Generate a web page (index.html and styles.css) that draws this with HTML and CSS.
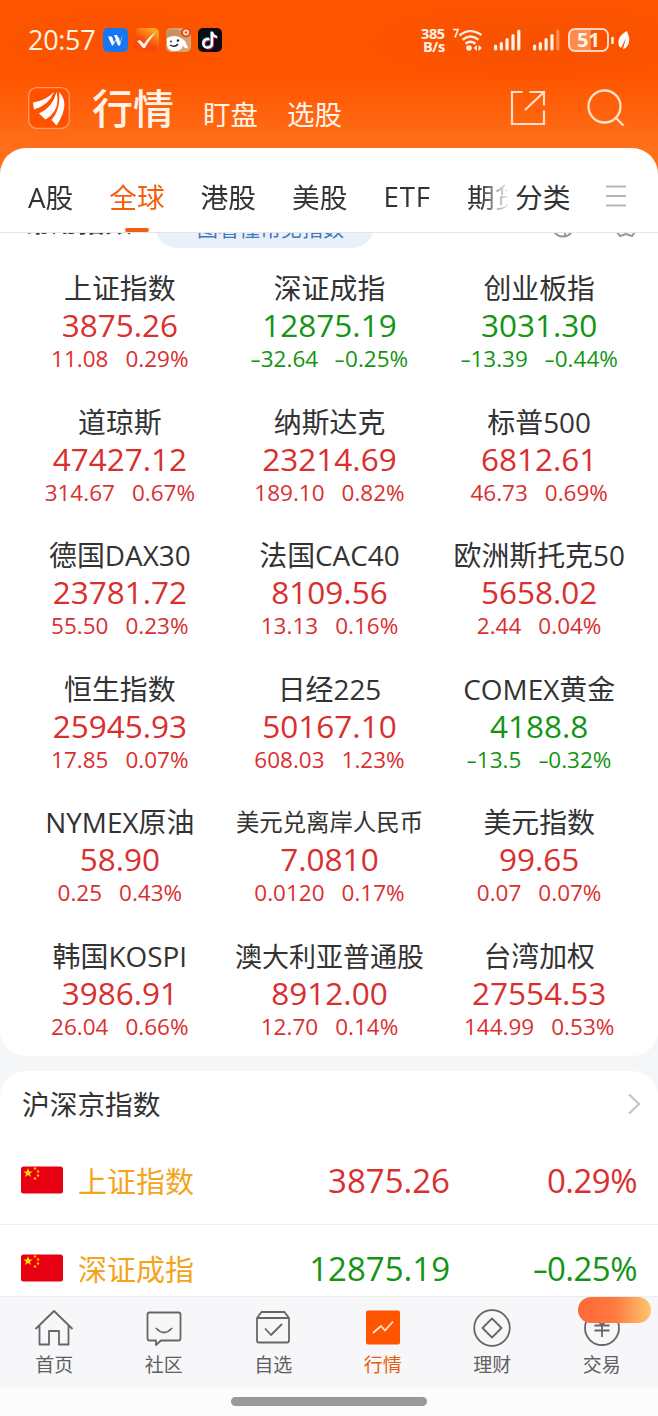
FILE: index.html
```html
<!DOCTYPE html>
<html lang="zh-CN">
<head>
    <meta charset="UTF-8">
    <meta name="viewport" content="width=device-width, initial-scale=1.0">
    <title>行情</title>
    <link rel="stylesheet" href="styles.css">
</head>
<body>
    <div class="top">
        <div class="status-bar">
            <span class="time">20:57</span>
            <div class="app-icons">
                <svg width="25" height="24" viewBox="0 0 25 24"><rect width="25" height="24" rx="5" fill="#1677f0"/><path d="M5 8.500h4l2 6 3-5h2l1 5 3-9-3 12h-2l-2-5-3 5H9zM11 7h3l1 2-2 3z" fill="#fff"/></svg>
                <svg width="24" height="24" viewBox="0 0 24 24"><defs><linearGradient id="ck" x1="0" y1="1" x2=".6" y2="0"><stop offset=".5" stop-color="#f94a0c"/><stop offset="1" stop-color="#ffa51c"/></linearGradient></defs><rect width="24" height="24" rx="5" fill="url(#ck)"/><path d="M2 13l3-1 4 4C12 11 16 7 21 4 17 9 13 14 10 20H8z" fill="#fff2e8"/></svg>
                <svg width="25" height="24" viewBox="0 0 25 24"><rect width="25" height="24" rx="5" fill="#d8a374"/><path d="M1 10Q9 6 15 10l4 3 3 7Q18 21 17 17q-1 6-8 6-7 0-8-6z" fill="#fff"/><path d="M0 10Q8 5 17 10L16 3 5 1 0 4z" fill="#c99160"/><circle cx="20" cy="4.500" r="5" fill="#e3491f"/><circle cx="20" cy="4.500" r="3" fill="#ffe1bd"/><circle cx="20" cy="4.500" r="1.200" fill="#e3491f"/><path d="M4 17q5 3 8-1" fill="none" stroke="#222" stroke-width="1.400"/><circle cx="5" cy="13.500" r=".9" fill="#222"/><circle cx="12" cy="12.500" r="1.200" fill="#222"/></svg>
                <svg width="24" height="24" viewBox="0 0 24 24"><rect width="24" height="24" rx="5" fill="#0d0c14"/><g fill="none" stroke-width="2.200"><path d="M11.500 11q-6 0-6 4.500t4.500 4 4-4.500V4q1 4.500 5 5" stroke="#25f4ee" transform="translate(-.6 -.6)"/><path d="M11.500 11q-6 0-6 4.500t4.500 4 4-4.500V4q1 4.500 5 5" stroke="#fe2c55" transform="translate(.8 .8)"/><path d="M11.500 11q-6 0-6 4.500t4.500 4 4-4.500V4q1 4.500 5 5" stroke="#fff"/></g></svg>
            </div>
            <div class="speed"><span>385</span><span>B/s</span></div>
            <svg class="wifi" width="30" height="24" viewBox="0 0 30 24"><path d="M0 1.500h5L2 9.500" fill="none" stroke="#ffefe0" stroke-width="1.700"/><g fill="none" stroke="#ffefe0" stroke-width="2.400"><path d="M6.500 7.500q10-8.500 22-.5"/><path d="M9.500 11.700q8-6.500 16 0"/><path d="M12.500 15.700q5-4 10 0"/></g><circle cx="16" cy="20" r="2.800" fill="#ffefe0"/><path d="M24 17v6l-3.500-3zM25.500 17v6l3.500-3z" fill="#ffefe0"/></svg>
            <svg class="signal" width="27" height="22" viewBox="0 0 27 22"><path d="M1.600 17v3M7.300 14.500V20M13.100 10.500V20M19 6.500V20M24.800 2V20" stroke="#fff2e6" stroke-width="3.200" stroke-linecap="round"/></svg>
            <svg class="signal" width="27" height="22" viewBox="0 0 27 22"><path d="M1.600 17v3M7.300 14.500V20M13.100 10.500V20M19 6.500V20" stroke="#fff2e6" stroke-width="3.200" stroke-linecap="round"/><path d="M24.800 2V20" stroke="#ff8a50" stroke-width="3.200" stroke-linecap="round"/></svg>
            <div class="battery">51</div>
            <svg class="leaf" width="20" height="19" viewBox="0 0 20 19"><path d="M2.500 6v7" stroke="#ffefe0" stroke-width="2.500"/><path d="M17 0C11 3 7 8 9 15l2 2 5-10-3 11C18 17 20 11 19 6z" fill="#fff"/></svg>
        </div>
        <div class="header">
            <svg class="logo" width="42" height="42" viewBox="0 0 42 42"><rect x=".7" y=".7" width="40.600" height="40.600" rx="8" fill="#ff5100" stroke="#ff9b68" stroke-width="1.300"/><path d="M5 15.500Q17 14 26 5 21 18 6 22.500zM11 26.500Q25 20 28.500 5 33 23 17.500 32.500zM23.500 33Q33 22 31 5 43 17 28.500 38.500z" fill="#fff"/></svg>
            <span class="title">行情</span>
            <span class="link">盯盘</span>
            <span class="link">选股</span>
            <svg class="share" width="36" height="36" viewBox="0 0 36 36" fill="none" stroke="#ffe0c8" stroke-width="2.200"><path d="M12.500 2H2v32h32V20.500M19.500 2H34v13.500M34 2L15 20"/></svg>
            <svg width="38" height="38" viewBox="0 0 38 38" fill="none" stroke="#ffe0c8" stroke-width="2.300"><circle cx="17.500" cy="17.500" r="16"/><path d="M28.500 28.500l8 8"/></svg>
        </div>
    </div>

    <div class="card indices">
        <div class="tabs">
            <div class="tab-scroll">
                <span>A股</span>
                <span class="active">全球</span>
                <span>港股</span>
                <span>美股</span>
                <span class="etf">ETF</span>
                <span>期货</span>
            </div>
            <span class="sort">分类</span>
            <svg width="22" height="22" viewBox="0 0 22 22"><path d="M1 1.500h20M1 11h20M1 20.500h20" stroke="#b5b5b5" stroke-width="2.200"/></svg>
        </div>
        <!-- row scrolled half under the tabs -->
        <div class="scrolled">
            <span class="common">常用指数</span>
            <span class="guide">一图看懂常见指数</span>
            <svg class="half-icons" width="86" height="24" viewBox="0 0 86 24" fill="none" stroke="#999" stroke-width="2"><circle cx="12" cy="12" r="10.500"/><path d="M14 8v14M66 18l3 4 6-2 6 2 3-4"/></svg>
        </div>
        <div class="grid">
            <div class="cell up"><span class="name">上证指数</span><span class="price">3875.26</span><span class="change"><i>11.08</i><i>0.29%</i></span></div>
            <div class="cell down"><span class="name">深证成指</span><span class="price">12875.19</span><span class="change"><i><b>-</b>32.64</i><i><b>-</b>0.25%</i></span></div>
            <div class="cell down"><span class="name">创业板指</span><span class="price">3031.30</span><span class="change"><i><b>-</b>13.39</i><i><b>-</b>0.44%</i></span></div>
            <div class="cell up"><span class="name">道琼斯</span><span class="price">47427.12</span><span class="change"><i>314.67</i><i>0.67%</i></span></div>
            <div class="cell up"><span class="name">纳斯达克</span><span class="price">23214.69</span><span class="change"><i>189.10</i><i>0.82%</i></span></div>
            <div class="cell up"><span class="name">标普500</span><span class="price">6812.61</span><span class="change"><i>46.73</i><i>0.69%</i></span></div>
            <div class="cell up"><span class="name">德国DAX30</span><span class="price">23781.72</span><span class="change"><i>55.50</i><i>0.23%</i></span></div>
            <div class="cell up"><span class="name">法国CAC40</span><span class="price">8109.56</span><span class="change"><i>13.13</i><i>0.16%</i></span></div>
            <div class="cell up"><span class="name">欧洲斯托克50</span><span class="price">5658.02</span><span class="change"><i>2.44</i><i>0.04%</i></span></div>
            <div class="cell up"><span class="name">恒生指数</span><span class="price">25945.93</span><span class="change"><i>17.85</i><i>0.07%</i></span></div>
            <div class="cell up"><span class="name">日经225</span><span class="price">50167.10</span><span class="change"><i>608.03</i><i>1.23%</i></span></div>
            <div class="cell down"><span class="name">COMEX黄金</span><span class="price">4188.8</span><span class="change"><i><b>-</b>13.5</i><i><b>-</b>0.32%</i></span></div>
            <div class="cell up"><span class="name">NYMEX原油</span><span class="price">58.90</span><span class="change"><i>0.25</i><i>0.43%</i></span></div>
            <div class="cell up"><span class="name small">美元兑离岸人民币</span><span class="price">7.0810</span><span class="change"><i>0.0120</i><i>0.17%</i></span></div>
            <div class="cell up"><span class="name">美元指数</span><span class="price">99.65</span><span class="change"><i>0.07</i><i>0.07%</i></span></div>
            <div class="cell up"><span class="name">韩国KOSPI</span><span class="price">3986.91</span><span class="change"><i>26.04</i><i>0.66%</i></span></div>
            <div class="cell up"><span class="name long">澳大利亚普通股</span><span class="price">8912.00</span><span class="change"><i>12.70</i><i>0.14%</i></span></div>
            <div class="cell up"><span class="name">台湾加权</span><span class="price">27554.53</span><span class="change"><i>144.99</i><i>0.53%</i></span></div>
        </div>
    </div>

    <div class="card china">
        <div class="section-title">
            <span>沪深京指数</span>
            <svg width="14" height="22" viewBox="0 0 14 22"><path d="M2 1.500l10 9.500-10 9.500" fill="none" stroke="#c4c4c4" stroke-width="2.200"/></svg>
        </div>
        <div class="row up">
            <svg class="flag" width="42" height="28" viewBox="0 0 42 28"><rect y=".5" width="42" height="27" rx="2.500" fill="#e60012"/><path id="star" d="M7 2l1.200 3.400h3.600L8.900 7.500l1.100 3.500L7 8.900 4 11l1.100-3.500-2.900-2.100h3.600z" fill="#ffde00"/><g fill="#ffb400"><circle cx="14" cy="2.500" r="1.300"/><circle cx="17" cy="5.500" r="1.300"/><circle cx="17" cy="9.500" r="1.300"/><circle cx="14" cy="12.500" r="1.300"/></g></svg>
            <span class="row-name">上证指数</span>
            <span class="row-price">3875.26</span>
            <span class="row-pct">0.29%</span>
        </div>
        <div class="row down">
            <svg class="flag" width="42" height="28" viewBox="0 0 42 28"><rect y=".5" width="42" height="27" rx="2.500" fill="#e60012"/><use href="#star"/><g fill="#ffb400"><circle cx="14" cy="2.500" r="1.300"/><circle cx="17" cy="5.500" r="1.300"/><circle cx="17" cy="9.500" r="1.300"/><circle cx="14" cy="12.500" r="1.300"/></g></svg>
            <span class="row-name">深证成指</span>
            <span class="row-price">12875.19</span>
            <span class="row-pct"><b>-</b>0.25%</span>
        </div>
    </div>

    <div class="nav">
        <div class="nav-item">
            <svg width="40" height="40" viewBox="0 0 40 40"><path d="M1.500 21L20 3l18.500 18M5.500 18v18.500H15V23h10v13.500h9.500V18"/></svg>
            <span>首页</span>
        </div>
        <div class="nav-item">
            <svg width="40" height="40" viewBox="0 0 40 40"><path d="M5.500 4.500h29q2 0 2 2v24q0 2-2 2H17L12 37v-4.500H5.500q-2 0-2-2v-24q0-2 2-2zM12 20q8 9 16 0"/></svg>
            <span>社区</span>
        </div>
        <div class="nav-item">
            <svg width="40" height="40" viewBox="0 0 40 40"><path d="M4 10h32v22.500q0 2-2 2H6q-2 0-2-2zL8.500 4h23L36 10M12 20.500l6 6.500 11-11"/></svg>
            <span>自选</span>
        </div>
        <div class="nav-item current">
            <svg width="40" height="40" viewBox="0 0 40 40"><rect x="3" y="2.500" width="34" height="34" rx="2" fill="#ff5500" stroke="none"/><path d="M10 25l8-7 4 4.500 8-9" stroke="#ffe6d5"/></svg>
            <span>行情</span>
        </div>
        <div class="nav-item">
            <svg width="40" height="40" viewBox="0 0 40 40"><circle cx="20" cy="20" r="17.800"/><path d="M20 10.500l9.500 9.500-9.500 9.500-9.500-9.500z"/></svg>
            <span>理财</span>
        </div>
        <div class="nav-item">
            <svg width="40" height="40" viewBox="0 0 40 40"><circle cx="20" cy="20" r="17"/><path d="M14 11l6 6 6-6M12.500 17.500h15M12.500 22.500h15M20 17v12"/></svg>
            <span>交易</span>
            <div class="badge"></div>
        </div>
    </div>
    <div class="home-bar"><div class="handle"></div></div>
</body>
</html>
```
FILE: styles.css
```css
* {
    box-sizing: border-box;
}
body {
    margin: 0;
    height: 1416px;
    overflow: hidden;
    display: flex;
    flex-direction: column;
    background: #f5f6f8;
    color: #333;
    font-family: "Open Sans", "Noto Sans CJK SC", sans-serif;
}
svg {
    display: block;
    flex: none;
}
span {
    white-space: nowrap;
}
.top {
    flex: none;
    height: 180px;
    background: linear-gradient(#ff5500 0, #ff5500 76px, #ff6f1a 148px);
    color: #fff4e8;
}
.status-bar {
    height: 80px;
    display: flex;
    align-items: center;
    padding-left: 28px;
    background: radial-gradient(ellipse 190px 45px at 530px 42px, #f65000, transparent), radial-gradient(ellipse 150px 45px at 120px 42px, #fa5200, transparent);
}
.time {
    width: 75px;
    padding-bottom: 2px;
    font-size: 27px;
    font-weight: 500;
    letter-spacing: -0.3px;
}
.app-icons {
    display: flex;
    gap: 7px;
    width: 318px;
}
.speed {
    display: flex;
    flex-direction: column;
    width: 32px;
    font-size: 14.500px;
    font-weight: 700;
    line-height: 13px;
    letter-spacing: -0.4px;
}
.speed span:last-child {
    padding-left: 2px;
}
.wifi {
    margin-right: 11px;
}
.signal {
    margin-right: 12px;
}
.battery {
    width: 41px;
    height: 24px;
    margin: 0 1px 0 -4px;
    border: 2px solid #ffd9bd;
    border-radius: 7px;
    background: linear-gradient(90deg, #ff8a50 58%, transparent 58%);
    font-size: 20px;
    font-weight: 700;
    line-height: 19px;
    text-align: center;
}
.header {
    height: 68px;
    display: flex;
    align-items: center;
    padding: 0 33px 12px 28px;
}
.title {
    margin-left: 22px;
    font-size: 41px;
    font-weight: 500;
    line-height: 50px;
}
.link {
    margin: 13px 0 0 29px;
    font-size: 27.500px;
    line-height: 32px;
}
.share {
    margin: 0 41px 0 auto;
}
.card {
    flex: none;
    background: #fff;
    border-radius: 26px;
}
.indices {
    height: 908px;
    margin-top: -32px;
}
.tabs {
    height: 85px;
    display: flex;
    align-items: center;
    padding-top: 12px;
    border-bottom: 1px solid #e6e6e6;
    font-size: 27.700px;
}
.tab-scroll {
    width: 508px;
    height: 72px;
    margin-right: 7px;
    padding-left: 28px;
    display: flex;
    align-items: center;
    gap: 36px;
    overflow: hidden;
    mask-image: linear-gradient(90deg, #000 480px, transparent 510px);
}
.etf {
    letter-spacing: 0.9px;
}
.active {
    position: relative;
    color: #f2600f;
}
.active::after {
    content: "";
    position: absolute;
    left: 16px;
    bottom: -16px;
    width: 24px;
    height: 4px;
    border-radius: 2px;
    background: #f2600f;
}
.sort {
    margin-right: 35px;
}
.scrolled {
    height: 37px;
    display: flex;
    align-items: flex-end;
    padding: 0 22px 22px 24px;
    overflow: hidden;
}
.common {
    width: 131px;
    margin-bottom: 10px;
    font-size: 27px;
    font-weight: 600;
    line-height: 32px;
}
.guide {
    width: 219px;
    height: 44px;
    padding-right: 9px;
    border-radius: 22px;
    background: #e8f1fa;
    color: #4478ba;
    font-size: 21px;
    line-height: 48px;
    text-align: center;
}
.half-icons {
    margin: 0 -1px 10px auto;
}
.grid {
    display: grid;
    grid-template-columns: repeat(3, 1fr);
    grid-auto-rows: 133.500px;
    padding: 0 14px 0 15px;
}
.cell {
    display: flex;
    flex-direction: column;
    align-items: center;
}
.name {
    height: 36px;
    color: #333;
    font-size: 27.900px;
    line-height: 37px;
}
.small {
    font-size: 23.400px;
}
.long {
    font-size: 27px;
}
.price {
    height: 37px;
    font-size: 31.500px;
    font-weight: 500;
    line-height: 37px;
}
.change {
    display: flex;
    gap: 17px;
    font-size: 22.500px;
    line-height: 32px;
}
.change i {
    font-style: normal;
}
/* wider minus sign */
b {
    display: inline-block;
    margin: 0 0.06em;
    font-weight: 400;
    transform: scaleX(1.5);
}
.up {
    color: #d9302f;
}
.down {
    color: #149414;
}
.china {
    flex: 1 1 0;
    min-height: 0;
    margin-top: 15px;
    overflow: hidden;
    border-radius: 26px 26px 0 0;
}
.section-title {
    height: 66px;
    display: flex;
    align-items: center;
    justify-content: space-between;
    padding: 0 17px 0 22px;
    font-size: 27.700px;
}
.section-title span {
    padding-bottom: 2px;
}
.row {
    height: 88px;
    display: flex;
    align-items: center;
    padding: 0 21px 1px;
    border-bottom: 1px solid #efefef;
    font-size: 33px;
    font-weight: 500;
}
.row-name {
    width: 130px;
    margin-left: 15px;
    color: #f3a41b;
    font-size: 29px;
    font-weight: 400;
}
.row-price {
    width: 242px;
    text-align: right;
}
.row-pct {
    flex: 1;
    text-align: right;
    letter-spacing: -0.5px;
}
.nav {
    flex: none;
    height: 92px;
    display: flex;
    padding-right: 1px;
    background: #f7f7fa;
    border-top: 1px solid #ececef;
}
.nav-item {
    position: relative;
    flex: 1;
    display: flex;
    flex-direction: column;
    align-items: center;
    padding: 11px 1px 0 0;
    color: #606060;
    font-size: 19px;
    line-height: 34px;
}
.nav-item svg {
    fill: none;
    stroke: #666;
    stroke-width: 1.800;
    stroke-linejoin: round;
}
.current {
    color: #e85d12;
}
.badge {
    position: absolute;
    top: 0;
    right: 6px;
    width: 73px;
    height: 26px;
    border-radius: 13px;
    background: linear-gradient(90deg, #ff6838, #ff7a3f 50%, #ffc571);
}
.home-bar {
    flex: none;
    height: 28px;
    padding-top: 9px;
    background: #fcfcfc;
}
.handle {
    width: 196px;
    height: 9px;
    margin: 0 auto;
    border-radius: 5px;
    background: #999;
}
```
